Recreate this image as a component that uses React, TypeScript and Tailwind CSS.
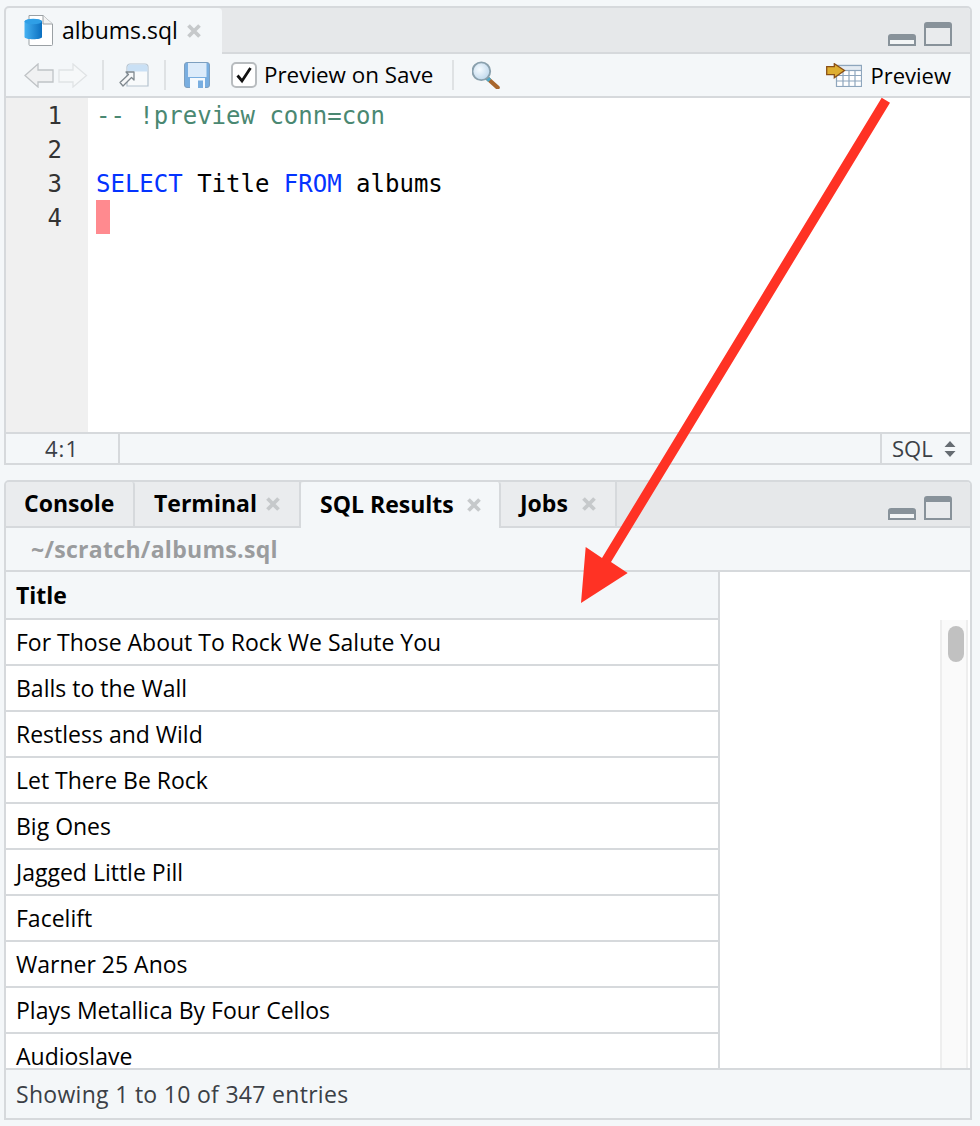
const rows = ["For Those About To Rock We Salute You","Balls to the Wall","Restless and Wild","Let There Be Rock","Big Ones","Jagged Little Pill","Facelift","Warner 25 Anos","Plays Metallica By Four Cellos","Audioslave"];

function X() {
  return <svg width="14" height="14" viewBox="0 0 14 14" className="shrink-0"><path d="M1.500 1.500L12.500 12.500M12.500 1.500L1.500 12.500" stroke="#c6c9cb" strokeWidth="3.800" /></svg>;
}
function WinIcons({ className }: { className: string }) {
  return (
    <div className={`absolute right-[18px] flex items-end gap-[8px] ${className}`}>
      <svg width="28" height="12" viewBox="0 0 28 12"><path d="M0 12V3a3 3 0 0 1 3-3h22a3 3 0 0 1 3 3v9z" fill="#88929a"/><rect x="2" y="6" width="24" height="4" fill="#f3f5f6"/></svg>
      <svg width="28" height="24" viewBox="0 0 28 24"><path d="M0 24V3a3 3 0 0 1 3-3h22a3 3 0 0 1 3 3v21z" fill="#88929a"/><rect x="2" y="6" width="24" height="16" fill="#e9ebed"/></svg>
    </div>
  );
}
function Sep() { return <div className="w-[2px] h-[30px] bg-[#dfe2e4]" />; }

export default function App() {
  const ui = "font-['Open_Sans','Noto_Sans',sans-serif]";
  const mono = "font-['DejaVu_Sans_Mono',monospace]";
  return (
    <div className={`relative w-[980px] h-[1126px] bg-[#f4f7f9] px-[4px] pt-[6px] overflow-hidden text-black ${ui}`}>
      {/* Source pane */}
      <div className="w-[968px] h-[459px] flex flex-col border-2 border-[#d6d9dc] rounded-t-[5px] overflow-hidden">
        <div className="relative h-[44px] shrink-0 bg-[#e6e8ea] flex border-b-2 border-[#d6d9dc] box-content">
          <div className="w-[216px] h-[46px] bg-[#f4f7f9] rounded-t-[4px] flex items-center pl-[18px] relative z-10">
            <svg width="30" height="31" viewBox="0 0 30 31" className="shrink-0 -mt-[2px]">
              <defs><linearGradient id="db" x1="0" x2="1" y1="0" y2="0"><stop offset="0" stopColor="#46b2f2"/><stop offset="1" stopColor="#0b6fc0"/></linearGradient></defs>
              <path d="M5 .5H19L28.500 9V29.500a1 1 0 0 1-1 1H6a1 1 0 0 1-1-1z" fill="#fff" stroke="#9aa0a4"/>
              <path d="M19 .5V9H28.500" fill="#f2f2f2" stroke="#9aa0a4"/>
              <path d="M.5 6.500C.5 3.500 18 3.500 18 6.500V22c0 3-17.500 3-17.500 0z" fill="url(#db)"/>
              <ellipse cx="9.200" cy="6.500" rx="8.700" ry="2.800" fill="#2f9fe6"/>
            </svg>
            <span className="ml-[8px] text-[23px] leading-none -mt-[1px]">albums.sql</span>
            <span className="ml-[9px]"><X /></span>
          </div>
          <WinIcons className="bottom-[6px]" />
        </div>
        <div className="relative h-[42px] shrink-0 bg-[#f4f7f9] border-b-2 border-[#d6d9dc] box-content flex items-center pl-[18px]">
          <svg width="30" height="25" viewBox="0 0 30 25"><path d="M1 12.500L14 1V7H29V19H14V24z" fill="#f0f1f2" stroke="#bfc3c6" strokeWidth="1.300"/></svg>
          <svg width="30" height="25" viewBox="0 0 30 25" className="ml-[4px]"><path d="M28.500 12.500L15 1V7H1V19H15V24z" fill="#f6f8f9" stroke="#e0e3e5" strokeWidth="1.300"/></svg>
          <div className="ml-[14px]"><Sep /></div>
          <svg width="32" height="24" viewBox="0 0 32 24" className="ml-[14px]">
            <path d="M12 1H27a3 3 0 0 1 3 3V23H9V4a3 3 0 0 1 3-3z" fill="#f8fafb" stroke="#b5c3cf" strokeWidth="1.200"/>
            <path d="M12 1.500H27a2.500 2.500 0 0 1 2.500 2.500V8.500H9.500V4a2.500 2.500 0 0 1 2.500-2.500z" fill="#c9e0f5"/>
            <path d="M16 9L8 9L10.500 11.500L2 19.500L5 23L13.500 14.500L16 17z" fill="#f7f8f9" stroke="#7f888e" strokeWidth="1.300" strokeLinejoin="round"/>
          </svg>
          <div className="ml-[14px]"><Sep /></div>
          <svg width="26" height="26" viewBox="0 0 26 26" className="ml-[18px]">
            <rect x=".5" y=".5" width="25" height="25" rx="2.500" fill="#79aee0" stroke="#7d9fbf"/>
            <rect x="4" y="1" width="18.500" height="14" fill="#dcebfa"/>
            <rect x="6" y="16" width="15" height="10" fill="#f5f9fd"/>
            <rect x="14" y="18.500" width="5" height="7.500" fill="#79aee0"/>
          </svg>
          <div className="ml-[21px] w-[26px] h-[26px] rounded-[5px] border-2 border-[#b8bcbf] bg-white flex items-center justify-center">
            <svg width="18" height="18" viewBox="0 0 18 18"><path d="M2.500 9.500L7 15L15.500 2" fill="none" stroke="#111" strokeWidth="2.800"/></svg>
          </div>
          <span className="ml-[7px] text-[22.400px] leading-none">Preview on Save</span>
          <div className="ml-[19px]"><Sep /></div>
          <svg width="28" height="28" viewBox="0 0 30 30" className="ml-[18px]">
            <defs><radialGradient id="lens" cx=".4" cy=".4" r=".7"><stop offset="0" stopColor="#f6fbff"/><stop offset="1" stopColor="#b9d4ea"/></radialGradient></defs>
            <path d="M17 19L27.500 28.500" stroke="#a8662c" strokeWidth="4.500" strokeLinecap="round"/>
            <path d="M16.500 18.500L19 21" stroke="#4fa8c8" strokeWidth="4.500"/>
            <circle cx="10" cy="11" r="9.500" fill="url(#lens)" stroke="#8aa0ad" strokeWidth="2"/>
          </svg>
          <div className="ml-auto flex items-center pr-[19px]">
            <svg width="36" height="24" viewBox="0 0 36 24">
              <rect x="10.500" y="2.500" width="25" height="21" fill="#fff" stroke="#8ea6bd" strokeWidth="1.200"/>
              <rect x="10.500" y="2.500" width="25" height="5" fill="#e4ebf2" stroke="#8ea6bd" strokeWidth="1.200"/>
              <path d="M10 12.500H36M10 18H36M17 8V24M23 8V24M29 8V24" stroke="#8ea6bd" strokeWidth="1.200"/>
              <path d="M.7 3.700H8.300V.7L18.500 7.500L8.300 14.800V11.700H.7z" fill="#deae31" stroke="#8a4f16" strokeWidth="1.300"/>
            </svg>
            <span className="ml-[8px] text-[22px] leading-none">Preview</span>
          </div>
        </div>
        <div className={`flex-1 flex bg-white min-h-0 ${mono} text-[24px] leading-[34px]`}>
          <div className="w-[82px] bg-[#f0f0f0] pt-[1px] pr-[26px] text-right text-[#333]">
            <div>1</div><div>2</div><div>3</div><div>4</div>
          </div>
          <div className="pl-[8px] pt-[1px] flex-1 whitespace-pre">
            <div className="text-[#4a8872]">-- !preview conn=con</div>
            <div>&nbsp;</div>
            <div><span className="text-[#0433ff]">SELECT</span> Title <span className="text-[#0433ff]">FROM</span> albums</div>
            <div className="w-[14px] h-[34px] -mt-[1px] bg-[#ff8a8f]" />
          </div>
        </div>
        <div className="h-[29px] shrink-0 bg-[#f4f7f9] border-t-2 border-[#d6d9dc] flex items-center text-[22px] text-[#3b4046] box-content">
          <div className="w-[114px] h-full border-r-2 border-[#d6d9dc] flex items-center justify-center tracking-[1px]">4:1</div>
          <div className="flex-1" />
          <div className="w-[90px] h-full border-l-2 border-[#d6d9dc] flex items-center pl-[10px]">
            SQL
            <svg width="12" height="16" viewBox="0 0 12 16" className="ml-[11px]"><path d="M6 0L11.500 6H.5zM.5 10H11.500L6 16z" fill="#666c72"/></svg>
          </div>
        </div>
      </div>

      {/* Console pane */}
      <div className="mt-[15px] w-[968px] h-[640px] flex flex-col border-2 border-[#d6d9dc] rounded-t-[5px] overflow-hidden">
        <div className="relative h-[46px] shrink-0 bg-[#e6e8ea] flex text-[23px] font-bold">
          <div className="w-[129px] h-[44px] bg-[#eaecee] border-r-2 border-[#d6d9dc] rounded-t-[3px] flex items-center pl-[18px] pb-[2px]">Console</div>
          <div className="w-[166px] h-[44px] bg-[#eaecee] border-r-2 border-[#d6d9dc] flex items-center pl-[19px] pb-[2px]">Terminal<span className="ml-[9px] mt-[2px]"><X /></span></div>
          <div className="w-[200px] h-[46px] bg-[#f4f7f9] border-r-2 border-[#d6d9dc] rounded-t-[3px] flex items-center pl-[19px] pb-[2px] relative z-10">SQL Results<span className="ml-[13px] mt-[2px]"><X /></span></div>
          <div className="w-[116px] h-[44px] bg-[#eaecee] border-r-2 border-[#d6d9dc] flex items-center pl-[19px] pb-[2px]">Jobs<span className="ml-[14px] mt-[2px]"><X /></span></div>
          <div className="absolute left-0 right-0 bottom-0 h-[2px] bg-[#d6d9dc]" />
          <WinIcons className="bottom-[8px]" />
        </div>
        <div className="h-[44px] shrink-0 bg-[#f4f7f9] border-b-2 border-[#d6d9dc] flex items-center pl-[25px] text-[23px] font-bold text-[#9a9c9e] tracking-[0.3px]">~/scratch/albums.sql</div>
        <div className="relative flex-1 min-h-0 flex bg-white overflow-hidden">
          <div className="w-[714px] shrink-0 border-r-2 border-[#d6d9dc] text-[23px]">
            <div className="h-[48px] bg-[#f4f7f9] border-b-2 border-[#d6d9dc] flex items-center pl-[10px] pt-[1px] font-bold">Title</div>
            {rows.map((r) => (
              <div key={r} className="h-[46px] border-b-2 border-[#d6d9dc] flex items-center pl-[10px] whitespace-nowrap">{r}</div>
            ))}
          </div>
          <div className="flex-1" />
          <div className="w-[28px] mr-[2px] mt-[48px] bg-[#fafafa] border-x-2 border-[#eeeeee] flex justify-start pl-[6px] pt-[6px]">
            <div className="w-[16px] h-[36px] rounded-full bg-[#c1c1c1]" />
          </div>
        </div>
        <div className="h-[50px] shrink-0 bg-[#f4f7f9] border-t-2 border-[#d6d9dc] flex items-center pl-[10px] text-[23px] text-[#3b4046] tracking-[0.3px]">Showing 1 to 10 of 347 entries</div>
      </div>

      {/* Annotation arrow */}
      <svg className="absolute left-0 top-0 pointer-events-none" width="980" height="1126" viewBox="0 0 980 1126">
        <path d="M881.700 97.700L890 102.700L611 562L627.700 573L581 603L585.700 547L602 558z" fill="#ff3224"/>
      </svg>
    </div>
  );
}
